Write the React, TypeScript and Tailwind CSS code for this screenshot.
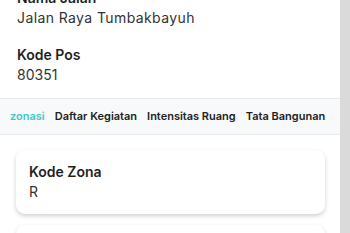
export default function App() {
  const tabs = ["zonasi", "Daftar Kegiatan", "Intensitas Ruang", "Tata Bangunan"];

  return (
    <main className="flex w-[350px] h-[233px] overflow-hidden bg-white font-['Inter',sans-serif]">
      <div className="w-[340px] flex-shrink-0">
        {/* detail lokasi */}
        <section className="px-[17px] -mt-[12px] pb-[13px] flex flex-col gap-[17px] text-[14px] leading-[20px]">
          <div>
            <h3 className="font-semibold text-[#1f1f1f]">Nama Jalan</h3>
            <p className="text-[#333333] tracking-[0.4px]">Jalan Raya Tumbakbayuh</p>
          </div>
          <div>
            <h3 className="font-semibold text-[#1f1f1f]">Kode Pos</h3>
            <p className="text-[#333333]">80351</p>
          </div>
        </section>

        {/* tabs */}
        <nav className="h-[37px] flex items-center gap-[10px] px-[10px] bg-[#f8f9fb] border-y border-[#e8eaee] whitespace-nowrap overflow-hidden">
          {tabs.map((t, i) => (
            <button
              key={t}
              className={
                i === 0
                  ? "text-[11px] font-semibold text-[#3fc8c8]"
                  : "text-[11px] font-semibold text-[#222222]"
              }
            >
              {t}
            </button>
          ))}
        </nav>

        {/* cards */}
        <div className="pt-[15px] pl-[16px] pr-[15px] flex flex-col gap-[11px]">
          <div
            style={{ boxShadow: "0px 2px 4px 0px #00000030" }}
            className="rounded-[9px] bg-white px-[13px] py-3 text-[14px] leading-[20px]"
          >
            <h3 className="font-semibold text-[#1f1f1f]">Kode Zona</h3>
            <p className="text-[#333333]">R</p>
          </div>
          <div
            style={{ boxShadow: "0px 2px 4px 0px #00000030" }}
            className="rounded-[9px] bg-white px-[13px] py-3 text-[14px] leading-[20px]"
          >
            <h3 className="font-semibold text-[#1f1f1f]">Nama Zona</h3>
            <p className="text-[#333333]">Perumahan</p>
          </div>
        </div>
      </div>
      <div className="w-[10px] bg-[#dadada]" />
    </main>
  );
}
